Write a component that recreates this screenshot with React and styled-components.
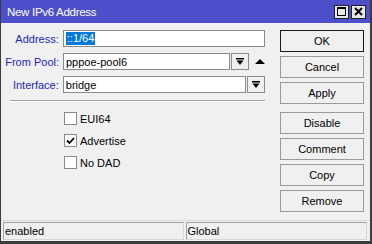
import styled, { createGlobalStyle } from 'styled-components';

const Global = createGlobalStyle`
  html, body { margin: 0; padding: 0; background: #f0f0f0; }
  body { font-family: "Liberation Sans", Arial, sans-serif; font-size: 11px; color: #000; }
`;

const Window = styled.div`
  width: 372px;
  height: 244px;
  box-sizing: border-box;
  display: flex;
  flex-direction: column;
  background: #f0f0f0;
  border-left: 1px solid #3c3c3c;
  border-right: 2px solid #3c3c3c;
  border-bottom: 3px solid #3c3c3c;
  overflow: hidden;
`;

const TitleBar = styled.div`
  height: 23px;
  flex: none;
  display: flex;
  align-items: center;
  background: #4c4fc9;
  margin-left: -1px;
  margin-right: -2px;
  padding: 0 6px 0 7px;
  color: #fff;
  font-size: 11.5px;
  letter-spacing: -0.3px;
`;

const TitleText = styled.span`
  flex: 1;
  padding-top: 1px;
`;

const WinButton = styled.div`
  width: 13px;
  height: 12px;
  margin-left: 2px;
  border: 1px solid #222;
  background: #e8e8e8;
  display: flex;
  align-items: center;
  justify-content: center;
`;

const Body = styled.div`
  flex: 1;
  display: flex;
`;

const Form = styled.div`
  width: 264px;
  padding: 7px 0 0 0;
  display: flex;
  flex-direction: column;
`;

const Row = styled.div`
  display: flex;
  align-items: center;
  height: 17px;
  margin-bottom: 6px;
`;

const Label = styled.div`
  width: 58px;
  text-align: right;
  padding-right: 4px;
  color: #1f1fb8;
  white-space: nowrap;
`;

const Input = styled.div`
  width: ${p => p.$w}px;
  height: 17px;
  box-sizing: border-box;
  border: 1px solid #8a8a8a;
  background: #fff;
  padding-left: 2px;
  display: flex;
  align-items: center;
  white-space: nowrap;
`;

const Selected = styled.span`
  background: #0078d7;
  color: #fff;
  padding: 0 1px;
  line-height: 13px;
`;

const DropButton = styled.div`
  width: 18px;
  height: 17px;
  box-sizing: border-box;
  margin-left: 1px;
  border: 1px solid #8a8a8a;
  background: #f0f0f0;
  display: flex;
  align-items: center;
  justify-content: center;
`;

const UpArrow = styled.div`
  margin-left: 6px;
  width: 0;
  height: 0;
  border-left: 5px solid transparent;
  border-right: 5px solid transparent;
  border-bottom: 5px solid #000;
`;

const Separator = styled.div`
  margin: 1px 0 0 9px;
  width: 255px;
  height: 1px;
  background: #a0a0a0;
  border-bottom: 1px solid #fff;
`;

const Checks = styled.div`
  display: flex;
  flex-direction: column;
  gap: 9px;
  padding: 10px 0 0 63px;
`;

const CheckRow = styled.label`
  display: flex;
  align-items: center;
  gap: 3px;
  height: 13px;
`;

const Box = styled.span`
  width: 13px;
  height: 13px;
  box-sizing: border-box;
  border: 1px solid #8a8a8a;
  background: #fff;
  display: flex;
  align-items: center;
  justify-content: center;
`;

const Buttons = styled.div`
  margin-left: 15px;
  padding-top: 7px;
  display: flex;
  flex-direction: column;
`;

const Button = styled.div`
  width: 84px;
  height: 22px;
  box-sizing: border-box;
  margin-bottom: 4px;
  margin-top: ${p => (p.$gap ? '4px' : '0')};
  border: 1px solid ${p => (p.$default ? '#1a1a1a' : '#9a9a9a')};
  background: #f0f0f0;
  display: flex;
  align-items: center;
  justify-content: center;
`;

const StatusBar = styled.div`
  flex: none;
  display: flex;
  gap: 2px;
  padding: 1px 3px 1px 2px;
  border-top: 1px solid #dadada;
`;

const StatusField = styled.div`
  flex: ${p => p.$flex};
  height: 18px;
  box-sizing: border-box;
  border-top: 1px solid #a0a0a0;
  border-left: 1px solid #a0a0a0;
  border-right: 1px solid #d8d8d8;
  border-bottom: 1px solid #d8d8d8;
  padding-left: 1px;
  display: flex;
  align-items: center;
`;

function DropIcon() {
  return (
    <svg width="8" height="8" viewBox="0 0 8 8">
      <rect x="0" y="0" width="8" height="1.5" fill="#000" />
      <polygon points="0.5,2.5 7.5,2.5 4,7" fill="#000" />
    </svg>
  );
}

function Check({ checked, children }) {
  return (
    <CheckRow>
      <Box>
        {checked && (
          <svg width="9" height="9" viewBox="0 0 9 9">
            <path d="M1 4.5 L3.5 7 L8 2" stroke="#000" strokeWidth="1.8" fill="none" />
          </svg>
        )}
      </Box>
      {children}
    </CheckRow>
  );
}

export default function App() {
  return (
    <>
      <Global />
      <Window>
        <TitleBar>
          <TitleText>New IPv6 Address</TitleText>
          <WinButton>
            <svg width="9" height="9" viewBox="0 0 9 9">
              <rect x="0.5" y="0.5" width="8" height="8" fill="none" stroke="#000" />
              <rect x="0" y="0" width="9" height="2" fill="#000" />
            </svg>
          </WinButton>
          <WinButton>
            <svg width="9" height="9" viewBox="0 0 9 9">
              <path d="M1 1 L8 8 M8 1 L1 8" stroke="#000" strokeWidth="2" />
            </svg>
          </WinButton>
        </TitleBar>
        <Body>
          <Form>
            <Row>
              <Label>Address:</Label>
              <Input $w={203}><Selected>::1/64</Selected></Input>
            </Row>
            <Row>
              <Label>From Pool:</Label>
              <Input $w={167}>pppoe-pool6</Input>
              <DropButton><DropIcon /></DropButton>
              <UpArrow />
            </Row>
            <Row>
              <Label>Interface:</Label>
              <Input $w={184}>bridge</Input>
              <DropButton><DropIcon /></DropButton>
            </Row>
            <Separator />
            <Checks>
              <Check>EUI64</Check>
              <Check checked>Advertise</Check>
              <Check>No DAD</Check>
            </Checks>
          </Form>
          <Buttons>
            <Button $default>OK</Button>
            <Button>Cancel</Button>
            <Button>Apply</Button>
            <Button $gap>Disable</Button>
            <Button>Comment</Button>
            <Button>Copy</Button>
            <Button>Remove</Button>
          </Buttons>
        </Body>
        <StatusBar>
          <StatusField $flex="180">enabled</StatusField>
          <StatusField $flex="181">Global</StatusField>
        </StatusBar>
      </Window>
    </>
  );
}
